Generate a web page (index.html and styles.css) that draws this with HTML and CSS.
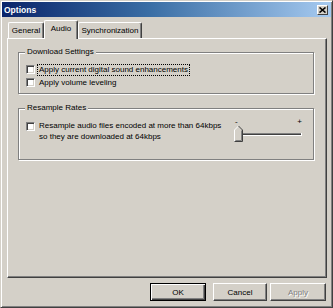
FILE: index.html
```html
<!DOCTYPE html>
<html lang="en">
<head>
<meta charset="UTF-8">
<title>Options</title>
<link rel="stylesheet" href="styles.css">
</head>
<body>

<div class="window">
    <div class="titlebar">
        <span class="title">Options</span>
        <span class="close">
            <svg width="7" height="6" viewBox="0 0 7 6"><path d="M0.5 0.5 L6.5 5.5 M6.5 0.5 L0.5 5.5" stroke="#000" stroke-width="1.6"/></svg>
        </span>
    </div>

    <div class="tabs">
        <div class="tab tab-general">General</div>
        <div class="tab tab-audio active">Audio</div>
        <div class="tab tab-sync">Synchronization</div>
    </div>

    <div class="panel">
        <div class="group group-download">
            <span class="legend">Download Settings</span>
            <div class="rows">
                <div class="check">
                    <span class="box"></span>
                    <span class="text focus">Apply current digital sound enhancements</span>
                </div>
                <div class="check">
                    <span class="box"></span>
                    <span class="text">Apply volume leveling</span>
                </div>
            </div>
        </div>

        <div class="group group-resample">
            <span class="legend">Resample Rates</span>
            <div class="resample-row">
                <span class="box"></span>
                <span class="text multi">Resample audio files encoded at more than 64kbps<br>so they are downloaded at 64kbps</span>
                <div class="slider">
                    <div class="slider-labels"><span>-</span><span>+</span></div>
                    <svg width="70" height="19" viewBox="0 0 70 19">
                        <rect x="3" y="9" width="66" height="1" fill="#808080"/>
                        <rect x="3" y="10" width="65" height="1" fill="#404040"/>
                        <rect x="3" y="11" width="66" height="1" fill="#ffffff"/>
                        <rect x="68" y="9" width="1" height="3" fill="#ffffff"/>
                        <polygon points="1,18 1,6 5.5,1.5 10,6 10,18" fill="#d4d0c8"/>
                        <path d="M1.5 17.5 V6 L5.5 2" fill="none" stroke="#ffffff"/>
                        <path d="M5.5 2 L9.5 6 V17.5 H1.5" fill="none" stroke="#404040"/>
                        <path d="M8.5 6.5 V16.5 H2.5" fill="none" stroke="#808080"/>
                    </svg>
                </div>
            </div>
        </div>
    </div>

    <div class="buttons">
        <button class="btn btn-ok">OK</button>
        <button class="btn btn-cancel">Cancel</button>
        <button class="btn btn-apply" disabled>Apply</button>
    </div>
</div>

</body>
</html>
```

FILE: styles.css
```css
* { box-sizing: border-box; }
body {
    margin: 0;
    background-color: #d4d0c8;
    font-family: "Liberation Sans", Arial, sans-serif;
    font-size: 8px;
    color: #000;
}
.window {
    width: 333px;
    height: 308px;
    padding: 1px;
    background-color: #d4d0c8;
    border: 1px solid;
    border-color: #d4d0c8 #404040 #404040 #d4d0c8;
    box-shadow: inset 1px 1px 0 #fff, inset -1px -1px 0 #808080;
}
.titlebar {
    height: 15px;
    display: flex;
    justify-content: space-between;
    align-items: center;
    padding: 0 3px 0 2px;
    background: linear-gradient(90deg, #0a246a 0%, #3a6ea5 45%, #a6caf0 100%);
}
.title {
    color: #fff;
    font-weight: bold;
    font-size: 8.5px;
}
.close {
    width: 11px;
    height: 10px;
    display: flex;
    justify-content: center;
    align-items: center;
    background-color: #d4d0c8;
    border: 1px solid;
    border-color: #fff #404040 #404040 #fff;
}

/* tabs */
.tabs {
    display: flex;
    align-items: flex-end;
    height: 18px;
    margin: 3px 0 0 6px;
}
.tab {
    height: 16px;
    line-height: 15px;
    text-align: center;
    border: 1px solid;
    border-bottom: none;
    border-color: #fff #404040 #404040 #fff;
    border-radius: 2px 2px 0 0;
    box-shadow: inset -1px 0 0 #808080;
    background-color: #d4d0c8;
}
.tab-general { width: 36px; }
.tab-audio { width: 34px; }
.tab-sync { width: 64px; }
.tab.active {
    height: 19px;
    line-height: 15px;
    margin-bottom: -1px;
    position: relative;
    z-index: 1;
}

/* panel */
.panel {
    margin-left: 5px;
    width: 320px;
    height: 240px;
    padding-top: 13px;
    border: 1px solid;
    border-color: #fff #404040 #404040 #fff;
    box-shadow: inset -1px -1px 0 #808080;
}
.group {
    margin-left: 10px;
    width: 296px;
    padding-left: 7px;
    border: 1px solid #808080;
    box-shadow: inset 1px 1px 0 #fff, 1px 1px 0 #fff;
}
.group-download { height: 42px; }
.group-resample { height: 52px; margin-top: 14px; }
.legend {
    display: table;
    margin: -6px 0 0 -1px;
    padding: 0 2px;
    line-height: 10px;
    background-color: #d4d0c8;
}
.rows { margin-top: 6px; }
.check {
    display: flex;
    align-items: center;
    height: 13px;
}
.box {
    flex: none;
    width: 9px;
    height: 9px;
    background-color: #fff;
    border: 1px solid;
    border-color: #808080 #fff #fff #808080;
    box-shadow: inset 1px 1px 0 #404040, inset -1px -1px 0 #d4d0c8;
}
.text {
    margin-left: 2px;
    padding: 0 1px;
    line-height: 10px;
    border: 1px dotted transparent;
}
.text.focus { border-color: #000; }

.resample-row {
    display: flex;
    align-items: flex-start;
    margin-top: 7px;
}
.resample-row .box { margin-top: 2px; }
.text.multi {
    line-height: 11px;
    border: none;
    margin-left: 3px;
}
.slider {
    margin-left: auto;
    margin-right: 10px;
    width: 70px;
}
.slider-labels {
    display: flex;
    justify-content: space-between;
    padding: 0 1px 0 2px;
    line-height: 5px;
    margin-top: -1px;
}
.slider svg { display: block; }

/* buttons */
.buttons {
    display: flex;
    justify-content: flex-end;
    margin-top: 5px;
    padding-right: 5px;
}
.btn {
    height: 18px;
    padding: 0;
    font-family: inherit;
    font-size: 8px;
    color: #000;
    background-color: #d4d0c8;
    border: 1px solid;
    border-color: #fff #404040 #404040 #fff;
    box-shadow: inset -1px -1px 0 #808080;
}
.btn-ok {
    width: 56px;
    margin-right: 7px;
    border-color: #000;
    box-shadow: inset 1px 1px 0 #fff, inset -1px -1px 0 #404040, inset -2px -2px 0 #808080;
}
.btn-cancel {
    width: 54px;
    margin-right: 3px;
}
.btn-apply {
    width: 56px;
    color: #808080;
    text-shadow: 1px 1px 0 #fff;
}
```
